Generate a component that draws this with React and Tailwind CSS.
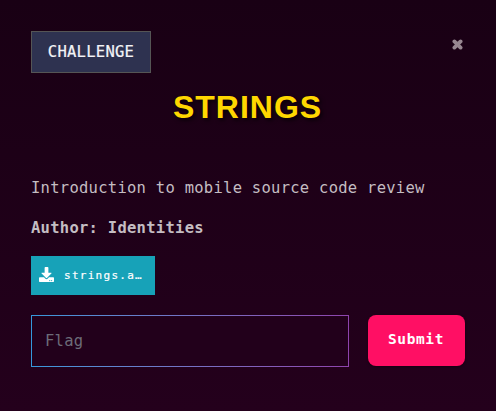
import { FaDownload } from "react-icons/fa";

export default function App() {
  return (
    <div className="flex h-[411px] w-[496px] flex-col bg-linear-to-b from-[#190014] to-[#24001c] pl-[31px] pr-[31px] pt-[31px] font-['DejaVu_Sans_Mono','Liberation_Mono',monospace] text-[15.5px] tracking-[0.27px] text-[#c4bdc2]">
      <header className="flex justify-between">
        <button className="h-[42px] w-[120px] border border-[#555555] bg-[#2e3250] pt-[2px] text-[15.5px] tracking-[0.27px] text-[#f3f4f7] [-webkit-text-stroke:0.2px_#f3f4f7]">
          CHALLENGE
        </button>
        <button aria-label="Close" className="mt-[8px] mr-[2px] h-[11px] w-[11px] text-[#978791]">
          <svg viewBox="0 0 11 11" className="h-[11px] w-[11px]" fill="none" stroke="currentColor" strokeWidth="3.8" strokeLinecap="round">
            <path d="M2.4 2.4 8.6 8.6M8.6 2.4 2.4 8.6" />
          </svg>
        </button>
      </header>
      <h1 className="mt-[15px] h-[38px] pr-px text-center font-['Liberation_Sans',Arial,sans-serif] text-[32px] leading-[38px] font-bold tracking-[1px] text-[#ffd700] [text-shadow:2px_2px_4px_rgba(0,0,0,0.8)]">
        STRINGS
      </h1>
      <p className="mt-[50px] h-6 leading-6 whitespace-nowrap">Introduction to mobile source code review</p>
      <p className="mt-4 h-6 leading-6 font-bold whitespace-nowrap">Author: Identities</p>
      <a className="mt-[16px] flex h-[39px] w-[124px] items-center bg-[#17a2b8] pl-2 text-[11px] tracking-[1.28px] text-white">
        <FaDownload className="mr-[10px] mb-[2px] h-[15px] w-[15px]" />
        <span className="pt-px [-webkit-text-stroke:0.2px_white]">strings.a…</span>
      </a>
      <form className="mt-5 flex gap-[19px]">
        <div className="h-[52px] w-[318px] bg-linear-to-r from-[#3498db] to-[#8e44ad] p-px">
          <input
            placeholder="Flag"
            className="h-[50px] w-full bg-[#22001b] px-[13px] tracking-[0.27px] placeholder:text-[#6c6b78] outline-none"
          />
        </div>
        <button type="button" className="h-[51px] w-[97px] rounded-[8px] bg-[#ff0f64] pr-px pb-[1px] text-[14.5px] font-bold tracking-[0.62px] text-white shadow-[0_1px_3px_rgba(0,0,0,0.4)]">
          Submit
        </button>
      </form>
    </div>
  );
}
